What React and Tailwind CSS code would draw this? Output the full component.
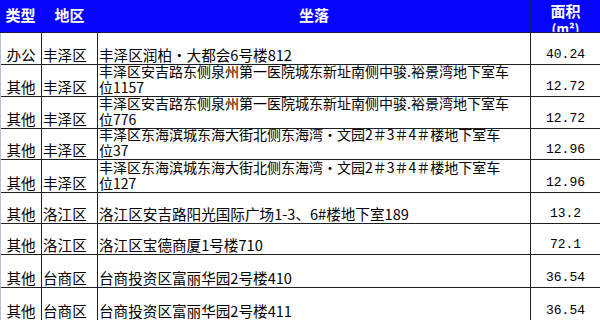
export default function App() {
  const font = { fontFamily: '"Noto Sans CJK SC", "Noto Sans CJK JP", sans-serif' };
  const l2 = "丰泽区安吉路东侧泉州第一医院城东新址南侧中骏.裕景湾地下室车";
  const l4 = "丰泽区东海滨城东海大街北侧东海湾・文园2＃3＃4＃楼地下室车";
  const rows = [
    { t: "办公", d: "丰泽区", a: ["丰泽区润柏・大都会6号楼812"], n: "40.24", h: "h-[32px]" },
    { t: "其他", d: "丰泽区", a: [l2, "位1157"], n: "12.72", h: "h-[32px]" },
    { t: "其他", d: "丰泽区", a: [l2, "位776"], n: "12.72", h: "h-[32px]" },
    { t: "其他", d: "丰泽区", a: [l4, "位37"], n: "12.96", h: "h-[31px]" },
    { t: "其他", d: "丰泽区", a: [l4, "位127"], n: "12.96", h: "h-[33px]" },
    { t: "其他", d: "洛江区", a: ["洛江区安吉路阳光国际广场1-3、6#楼地下室189"], n: "13.2", h: "h-[31px]" },
    { t: "其他", d: "洛江区", a: ["洛江区宝德商厦1号楼710"], n: "72.1", h: "h-[31px]" },
    { t: "其他", d: "台商区", a: ["台商投资区富丽华园2号楼410"], n: "36.54", h: "h-[33px]" },
    { t: "其他", d: "台商区", a: ["台商投资区富丽华园2号楼411"], n: "36.54", h: "h-[33px]" },
  ];
  return (
    <div lang="zh-CN" className="w-[600px] h-[320px] overflow-hidden bg-white" style={font}>
      <div className="grid grid-cols-[42px_56px_433px_69px] h-[33px] bg-[#0505fb] text-white font-bold text-[15px] border-b border-[#1a1a40]">
        <div className="flex items-center justify-center border-r border-[#1a1a60] pb-[1px]">类型</div>
        <div className="flex items-center justify-center border-r border-[#1a1a60] pb-[1px]">地区</div>
        <div className="flex items-center justify-center border-r border-[#1a1a60] pb-[1px]">坐落</div>
        <div className="flex flex-col items-center overflow-hidden pt-[2px] leading-[18px]">
          <span>面积</span>
          <span className="text-[13px]">(m²)</span>
        </div>
      </div>
      <div className="border-l border-[#b8c0d8]">
        {rows.map((r, i) => (
          <div key={i} className={"grid grid-cols-[41px_56px_433px_69px] border-b border-[#202020] text-[14.6px] leading-[16px] text-black " + r.h}>
            <div className="flex items-end justify-center border-r border-[#202020] pb-[1px]">{r.t}</div>
            <div className="flex items-end justify-start pl-[1px] border-r border-[#202020] pb-[1px]">{r.d}</div>
            <div className={"flex flex-col justify-end pl-[1px] border-r border-[#202020] pb-[1px] overflow-hidden " + (r.a.length > 1 ? "text-[14px] leading-[15.5px]" : "text-[14.6px]")}>
              {r.a.map((l, j) => (
                <div key={j} className="whitespace-nowrap">{l}</div>
              ))}
            </div>
            <div className="flex items-end justify-center pb-[1px] text-[13px]" style={{ fontFamily: '"Liberation Mono", monospace' }}>
              {r.n}
            </div>
          </div>
        ))}
      </div>
    </div>
  );
}
